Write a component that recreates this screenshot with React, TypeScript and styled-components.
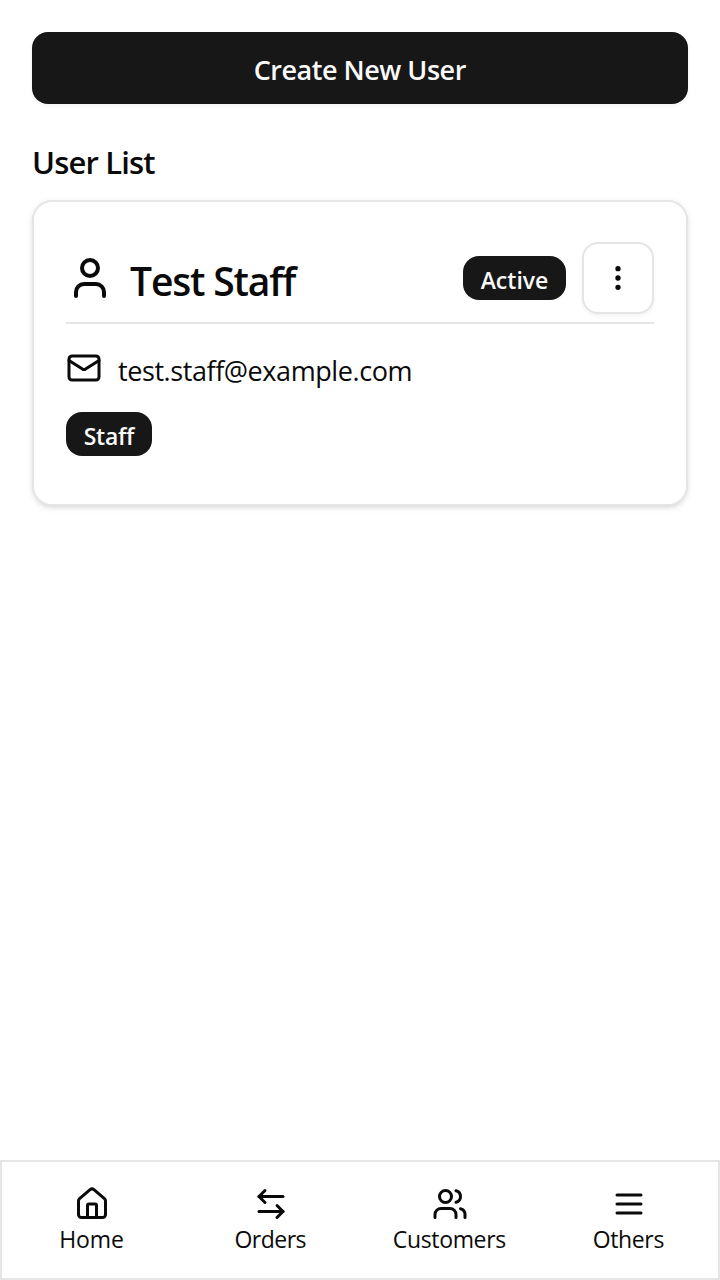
import React from "react";
import styled, { createGlobalStyle } from "styled-components";
import { ArrowLeftRight, EllipsisVertical, House, Mail, User, Users } from "lucide-react";

const GlobalStyle = createGlobalStyle`
  *, *::before, *::after { box-sizing: border-box; }
  body {
    margin: 0;
    background: #fff;
    color: #0a0a0a;
    font-family: "Segoe UI", "Open Sans", "Noto Sans", sans-serif;
  }
  svg { display: block; flex-shrink: 0; }
`;

const Page = styled.div`
  display: flex;
  flex-direction: column;
  height: 1280px;
`;

const Main = styled.main`
  flex: 1;
  display: flex;
  flex-direction: column;
  padding: 32px 32px 0;
`;

const Label = styled.span<{ $track?: number; $drop?: number }>`
  display: block;
  white-space: nowrap;
  letter-spacing: ${(p) => p.$track ?? 0}px;
  margin-right: ${(p) => -(p.$track ?? 0)}px;
  padding-top: ${(p) => p.$drop ?? 0}px;
`;

const PrimaryButton = styled.button`
  display: flex;
  align-items: center;
  justify-content: center;
  height: 72px;
  border: 0;
  border-radius: 16px;
  background: #171717;
  color: #fafafa;
  font: 600 27px/40px "Segoe UI", "Open Sans", "Noto Sans", sans-serif;
  box-shadow: 0 2px 4px rgba(0, 0, 0, 0.05);
`;

const SectionTitle = styled.h2`
  display: flex;
  margin: 32px 0 14px;
  font-size: 31px;
  line-height: 48px;
  font-weight: 600;
`;

const Card = styled.section`
  height: 306px;
  padding: 40px 32px;
  border: 2px solid #e5e5e5;
  border-radius: 20px;
  background: #fff;
  box-shadow: 0 2px 6px rgba(0, 0, 0, 0.1), 0 2px 4px -2px rgba(0, 0, 0, 0.1);
`;

const CardHeader = styled.header`
  display: flex;
  align-items: center;
  gap: 16px;
  height: 82px;
  padding-bottom: 8px;
  border-bottom: 2px solid #e5e5e5;
`;

const UserName = styled.h3`
  display: flex;
  flex: 1;
  margin: 0;
  font-size: 39px;
  line-height: 56px;
  font-weight: 600;
`;

const Badge = styled.span<{ $width: number }>`
  display: inline-flex;
  align-items: center;
  justify-content: center;
  width: ${(p) => p.$width}px;
  height: 44px;
  border-radius: 16px;
  background: #171717;
  color: #fafafa;
  font-size: 23px;
  line-height: 32px;
  font-weight: 600;
`;

const MenuButton = styled.button`
  display: flex;
  align-items: center;
  justify-content: center;
  width: 72px;
  height: 72px;
  padding: 0;
  border: 2px solid #e5e5e5;
  border-radius: 16px;
  background: #fff;
  color: #0a0a0a;
  box-shadow: 0 2px 4px rgba(0, 0, 0, 0.05);
`;

const EmailRow = styled.div`
  display: flex;
  align-items: center;
  gap: 16px;
  height: 40px;
  margin: 24px 0;
  font-size: 27px;
  line-height: 40px;
`;

const NavBar = styled.nav`
  display: grid;
  grid-template-columns: repeat(4, 1fr);
  height: 120px;
  border: 2px solid #e5e5e5;
  background: #fff;
`;

const NavItem = styled.a`
  display: flex;
  flex-direction: column;
  align-items: center;
  padding-top: 24px;
  font-size: 23px;
  line-height: 32px;
`;

const MenuLines = () => (
  <svg width="36" height="36" viewBox="0 0 24 24" fill="none" stroke="currentColor" strokeWidth="2" strokeLinecap="round">
    <path d="M4 6h16M4 12h16M4 18h16" />
  </svg>
);

const navItems = [
  { label: "Home", icon: <House size={36} />, track: -0.1 },
  { label: "Orders", icon: <ArrowLeftRight size={36} />, track: -0.5 },
  { label: "Customers", icon: <Users size={36} />, track: -0.35 },
  { label: "Others", icon: <MenuLines />, track: -0.35 },
];

export default function App() {
  return (
    <Page>
      <GlobalStyle />
      <Main>
        <PrimaryButton>
          <Label $drop={4} $track={-0.48}>Create New User</Label>
        </PrimaryButton>
        <SectionTitle>
          <Label $drop={2} $track={-0.85}>User List</Label>
        </SectionTitle>
        <Card>
          <CardHeader>
            <User size={48} />
            <UserName>
              <Label $drop={6} $track={-1.15}>Test Staff</Label>
            </UserName>
            <Badge $width={103}>
              <Label $drop={3}>Active</Label>
            </Badge>
            <MenuButton aria-label="User actions">
              <EllipsisVertical size={32} />
            </MenuButton>
          </CardHeader>
          <EmailRow>
            <Mail size={36} />
            <Label $drop={5} $track={-0.42}>test.staff@example.com</Label>
          </EmailRow>
          <Badge $width={86}>
            <Label $drop={3} $track={-0.3}>Staff</Label>
          </Badge>
        </Card>
      </Main>
      <NavBar>
        {navItems.map((item) => (
          <NavItem key={item.label}>
            {item.icon}
            <Label $drop={1} $track={item.track}>{item.label}</Label>
          </NavItem>
        ))}
      </NavBar>
    </Page>
  );
}
